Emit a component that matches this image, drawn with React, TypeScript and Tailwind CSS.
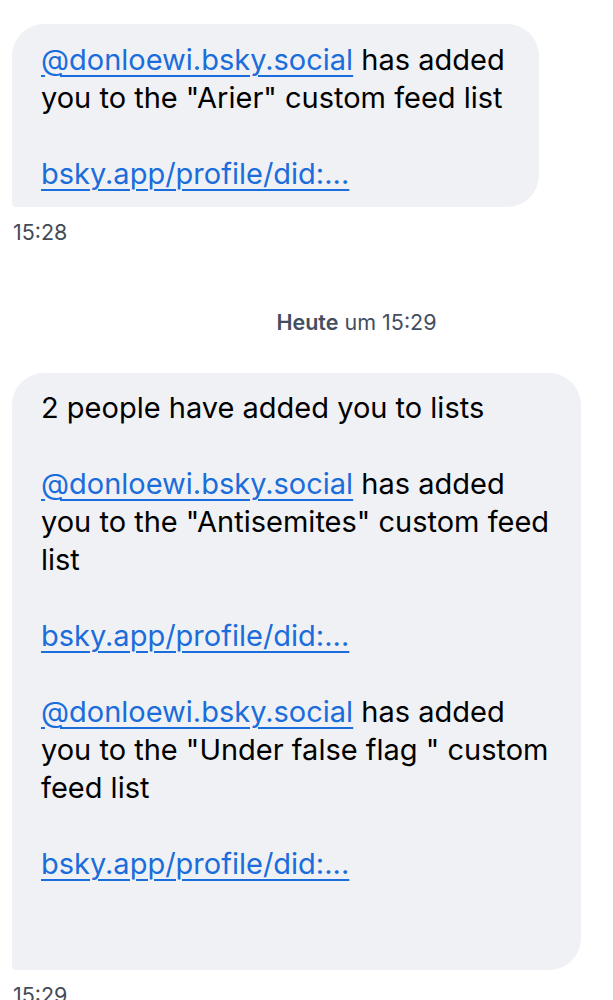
import React from "react";

const font = { fontFamily: "Inter, 'Noto Sans', sans-serif" };

function Link({ children }: { children: React.ReactNode }) {
  return <span className="text-[#1a6ddb] underline decoration-[2px] underline-offset-[5px]">{children}</span>;
}

function Line({ children }: { children?: React.ReactNode }) {
  return <div className="h-[38px] whitespace-nowrap">{children}</div>;
}

export default function App() {
  return (
    <div className="w-[613px] h-[1000px] overflow-hidden bg-white text-black" style={font}>
      <div className="pt-[24px] pl-[12px]">
        <div className="w-fit bg-[#f0f1f5] rounded-[32px] rounded-bl-[4px] pl-[29px] pr-[34px] pt-[17px] pb-[14px] text-[29px] leading-[38px]">
          <Line>
            <Link>@donloewi.bsky.social</Link> has added
          </Line>
          <Line>you to the "Arier" custom feed list</Line>
          <Line />
          <Line>
            <Link>bsky.app/profile/did:...</Link>
          </Line>
        </div>
        <div className="mt-[13px] pl-[1px] text-[21.5px] leading-[24px] text-[#434b57]">15:28</div>
      </div>

      <div className="mt-[66px] flex justify-center pl-[100px] text-[21.5px] leading-[24px] text-[#434e60]">
        <span>
          <span className="font-semibold">Heute</span> um 15:29
        </span>
      </div>

      <div className="mt-[39px] pl-[12px]">
        <div className="w-fit bg-[#f0f1f5] rounded-[32px] rounded-bl-[4px] pl-[29px] pr-[32px] pt-[16px] pb-[11px] text-[29px] leading-[38px]">
          <Line>2 people have added you to lists</Line>
          <Line />
          <Line>
            <Link>@donloewi.bsky.social</Link> has added
          </Line>
          <Line>you to the "Antisemites" custom feed</Line>
          <Line>list</Line>
          <Line />
          <Line>
            <Link>bsky.app/profile/did:...</Link>
          </Line>
          <Line />
          <Line>
            <Link>@donloewi.bsky.social</Link> has added
          </Line>
          <Line>you to the "Under false flag " custom</Line>
          <Line>feed list</Line>
          <Line />
          <Line>
            <Link>bsky.app/profile/did:...</Link>
          </Line>
          <Line />
          <Line />
        </div>
        <div className="mt-[13px] pl-[1px] text-[21.5px] leading-[24px] text-[#434b57]">15:29</div>
      </div>
    </div>
  );
}
